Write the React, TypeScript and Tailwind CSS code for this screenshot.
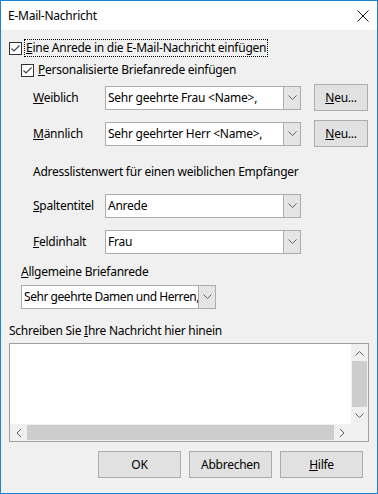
import React from "react";

const FONT = { fontFamily: '"Noto Sans", "Open Sans", sans-serif' };

function Chevron({ dir = "down", className = "" }: { dir?: "down" | "up" | "left" | "right"; className?: string }) {
  const rot = { down: 0, up: 180, left: 90, right: -90 }[dir];
  return (
    <svg width="9" height="6" viewBox="0 0 9 6" className={className} style={{ transform: `rotate(${rot}deg)` }}>
      <path d="M0.5 0.5 L4.5 4.5 L8.5 0.5" fill="none" stroke="currentColor" strokeWidth="1" />
    </svg>
  );
}

function Check() {
  return (
    <span className="w-[13px] h-[13px] border border-[#333] bg-white flex items-center justify-center shrink-0">
      <svg width="11" height="11" viewBox="0 0 11 11">
        <path d="M1.5 5.5 L4 8 L9.5 2.5" fill="none" stroke="#444" strokeWidth="1.2" />
      </svg>
    </span>
  );
}

function Combo({ value, w = "w-[196px]", tight = false }: { value: string; w?: string; tight?: boolean }) {
  return (
    <div className={`${w} h-[24px] border border-[#adadad] bg-white flex shrink-0`}>
      <span
        className={`flex-1 min-w-0 pl-[2px] flex items-center whitespace-nowrap overflow-hidden ${tight ? "tracking-[-0.45px]" : ""}`}
      >
        {value}
      </span>
      <span className="w-[17px] bg-[#e5e5e5] border-l border-[#adadad] flex items-center justify-center text-[#606060]">
        <Chevron />
      </span>
    </div>
  );
}

function Btn({ children, w = "w-[83px]" }: { children: React.ReactNode; w?: string }) {
  return (
    <div className={`${w} h-[27px] border border-[#adadad] bg-[#e1e1e1] flex items-center justify-center shrink-0`}>
      {children}
    </div>
  );
}

function Row({ acc, rest, value, neu = false, mt }: { acc: string; rest: string; value: string; neu?: boolean; mt: string }) {
  return (
    <div className={`flex items-center pl-[32px] ${mt} h-[27px]`}>
      <span className="w-[72px]">
        <u>{acc}</u>
        {rest}
      </span>
      <Combo value={value} />
      {neu && (
        <div className="ml-[13px]">
          <Btn w="w-[54px]">
            <span>
              <u>N</u>eu...
            </span>
          </Btn>
        </div>
      )}
    </div>
  );
}

export default function App() {
  return (
    <div
      className="w-[378px] h-[494px] border border-[#1883d7] bg-[#f0f0f0] flex flex-col text-[12px] text-black leading-[16px] tracking-[-0.25px]"
      style={FONT}
    >
      <div className="h-[29px] bg-white flex items-center justify-between pl-[7px] pr-[8px] shrink-0">
        <span>E-Mail-Nachricht</span>
        <svg width="12" height="12" viewBox="0 0 12 12">
          <path d="M0.5 0.5 L11.5 11.5 M11.5 0.5 L0.5 11.5" stroke="#111" strokeWidth="1" />
        </svg>
      </div>

      <div className="flex items-center pl-[8px] mt-[10px] h-[16px] gap-[3px]">
        <Check />
        <span className="outline-1 outline-dotted outline-black px-[1px]">
          <u>E</u>ine Anrede in die E-Mail-Nachricht einfügen
        </span>
      </div>

      <div className="flex items-center pl-[20px] mt-[6px] h-[16px] gap-[4px]">
        <Check />
        <span>
          <u>P</u>ersonalisierte Briefanrede einfügen
        </span>
      </div>

      <Row acc="W" rest="eiblich" value="Sehr geehrte Frau <Name>," neu mt="mt-[6px]" />
      <Row acc="M" rest="ännlich" value="Sehr geehrter Herr <Name>," neu mt="mt-[9px]" />

      <div className="pl-[32px] mt-[17px] h-[16px]">Adresslistenwert für einen weiblichen Empfänger</div>

      <div className="flex items-center pl-[32px] mt-[14px] h-[24px]">
        <span className="w-[72px]">
          <u>S</u>paltentitel
        </span>
        <Combo value="Anrede" />
      </div>
      <div className="flex items-center pl-[32px] mt-[12px] h-[24px]">
        <span className="w-[72px]">
          <u>F</u>eldinhalt
        </span>
        <Combo value="Frau" />
      </div>

      <div className="pl-[20px] mt-[10px] h-[16px]">
        <u>A</u>llgemeine Briefanrede
      </div>
      <div className="pl-[20px] mt-[5px]">
        <Combo value="Sehr geehrte Damen und Herren," w="w-[195px]" tight />
      </div>

      <div className="pl-[8px] mt-[14px] h-[16px]">
        Schreiben Sie <u>I</u>hre Nachricht hier hinein
      </div>

      <div className="ml-[8px] mt-[4px] w-[360px] h-[99px] border border-[#a0a0a0] bg-white flex flex-col">
        <div className="flex-1 flex">
          <div className="flex-1" />
          <div className="w-[17px] bg-[#f0f0f0] flex flex-col items-center text-[#606060]">
            <div className="h-[17px] flex items-center justify-center">
              <Chevron dir="up" />
            </div>
            <div className="w-[15px] flex-1 bg-[#cdcdcd]" />
            <div className="h-[17px] flex items-center justify-center">
              <Chevron dir="down" />
            </div>
          </div>
        </div>
        <div className="h-[17px] flex">
          <div className="flex-1 bg-[#f0f0f0] flex items-center text-[#606060]">
            <div className="w-[17px] flex items-center justify-center">
              <Chevron dir="left" />
            </div>
            <div className="flex-1 h-[15px] bg-[#cdcdcd]" />
            <div className="w-[17px] flex items-center justify-center">
              <Chevron dir="right" />
            </div>
          </div>
          <div className="w-[17px] bg-[#f0f0f0]" />
        </div>
      </div>

      <div className="flex justify-end gap-[8px] pr-[14px] mt-[9px]">
        <Btn>OK</Btn>
        <Btn>Abbrechen</Btn>
        <Btn>
          <span>
            <u>H</u>ilfe
          </span>
        </Btn>
      </div>
    </div>
  );
}
